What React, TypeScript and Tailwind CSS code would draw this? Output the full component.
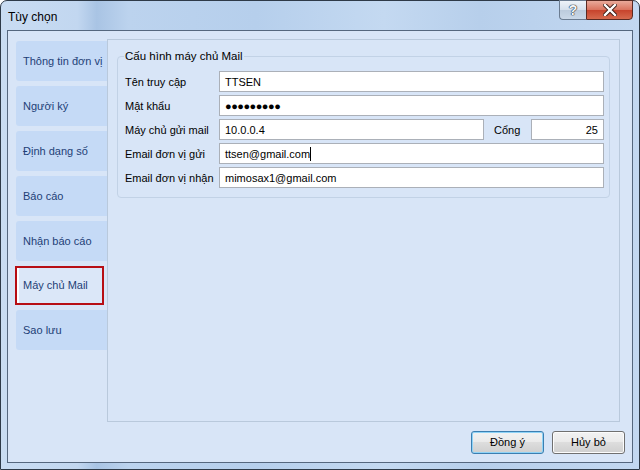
import React from 'react';

const font = { fontFamily: '"Liberation Sans", Arial, sans-serif' };

const tabs = ['Thông tin đơn vị', 'Người ký', 'Định dạng số', 'Báo cáo', 'Nhận báo cáo', 'Máy chủ Mail', 'Sao lưu'];

function Field({ value, className = '', right = false, caret = false }: { value: string; className?: string; right?: boolean; caret?: boolean }) {
  return (
    <div className={`h-[21px] bg-white border border-[#abb0b8] flex items-center px-[5px] text-[11px] text-black ${right ? 'justify-end' : ''} ${className}`}>
      <span>{value}</span>
      {caret && <span className="w-px h-[14px] bg-black" />}
    </div>
  );
}

function Row({ label, children }: { label: string; children: React.ReactNode }) {
  return (
    <div className="flex items-center h-[21px]">
      <div className="w-[94px] text-[11px] text-black whitespace-nowrap">{label}</div>
      {children}
    </div>
  );
}

function Btn({ label, focused = false }: { label: string; focused?: boolean }) {
  return (
    <button
      className={`w-[73px] h-[23px] rounded-[3px] border text-[11px] text-black bg-[linear-gradient(#f2f2f2,#ebebeb_45%,#dddddd_50%,#cfcfcf)] ${
        focused ? 'border-[#3c7fb1] shadow-[inset_0_0_0_1px_#8fd3f7]' : 'border-[#707070] shadow-[inset_0_0_0_1px_#fcfcfc]'
      }`}
    >
      {label}
    </button>
  );
}

export default function App() {
  return (
    <div style={font} className="w-[640px] h-[470px] overflow-hidden bg-white">
      <div className="w-[640px] h-[470px] rounded-t-[7px] border border-[#2e3a48] flex flex-col bg-[linear-gradient(90deg,#c9dcf2_0%,#c2d7f0_12%,#a9c4e4_15%,#bcd3ee_20%,#b6cfec_40%,#c4d9f1_60%,#b7cfeb_75%,#c3d8f1_100%)]">
        {/* title bar */}
        <div className="h-[29px] flex items-start shrink-0">
          <div className="pl-[7px] pt-[7px] text-[12px] text-black flex-1">Tùy chọn</div>
          <div className="flex mr-[6px] mt-[-1px]">
            <div className="w-[27px] h-[20px] rounded-bl-[4px] border border-[#6b7c91] border-r-0 bg-[linear-gradient(#eef3f9,#d5e0ec_50%,#bccbdc_51%,#cad8e8)] flex items-center justify-center text-[14px] font-bold text-[#f5f7fa] [text-shadow:0_0_1px_#1e2733,0_0_1px_#1e2733,0_0_1px_#1e2733]">
              ?
            </div>
            <div className="w-[47px] h-[20px] rounded-br-[4px] border border-[#5a2a22] bg-[linear-gradient(#e9a99a,#d9725d_50%,#c7432c_51%,#d66a4e)] flex items-center justify-center">
              <svg width="14" height="12" viewBox="0 0 14 12">
                <path d="M2 1 L12 11 M12 1 L2 11" stroke="#3a1a14" strokeWidth="4.2" strokeLinecap="square" />
                <path d="M2 1 L12 11 M12 1 L2 11" stroke="#ffffff" strokeWidth="2.4" strokeLinecap="square" />
              </svg>
            </div>
          </div>
        </div>

        {/* client area */}
        <div className="flex-1 mx-[6px] mb-[6px] border border-[#55677e] bg-[#d8e5f7] flex flex-col pt-[8px] pl-[8px] pr-[12px]">
          <div className="flex h-[383px]">
            <div className="w-[91px] shrink-0 flex flex-col gap-[5px] pt-[2px]">
              {tabs.map((t, i) =>
                i === 5 ? (
                  <div key={t} className="w-[89px] h-[39px] ml-[-1px] border-2 border-[#b70e14] bg-[#dbe7f8] flex items-center pl-[6px] text-[11px] text-[#1e3f76] whitespace-nowrap shadow-[inset_2px_0_0_#ffffff]">
                    {t}
                  </div>
                ) : (
                  <div key={t} className="h-[40px] rounded-l-[3px] bg-[#c5daf6] flex items-center pl-[7px] text-[11px] text-[#1e3f76] whitespace-nowrap">
                    {t}
                  </div>
                )
              )}
            </div>
            <div className="flex-1 border border-[#b9c9dc] bg-[#d8e5f7] pt-[8px] px-[9px]">
              <fieldset className="border border-[#c2d2e6] rounded-[4px] pl-[7px] pr-[5px] pb-[9px]">
                <legend className="ml-[-1px] px-[1px] text-[11.5px] text-black">Cấu hình máy chủ Mail</legend>
                <div className="flex flex-col gap-[3px] mt-[6px]">
                  <Row label="Tên truy cập"><Field value="TTSEN" className="flex-1" /></Row>
                  <Row label="Mật khẩu">
                    <Field value="●●●●●●●●●" className="flex-1 tracking-[-0.5px] text-[9px]" />
                  </Row>
                  <Row label="Máy chủ gửi mail">
                    <Field value="10.0.0.4" className="w-[265px]" />
                    <div className="w-[47px] pl-[10px] text-[11px] text-black">Cổng</div>
                    <Field value="25" right className="flex-1" />
                  </Row>
                  <Row label="Email đơn vị gửi"><Field value="ttsen@gmail.com" caret className="flex-1" /></Row>
                  <Row label="Email đơn vị nhận"><Field value="mimosax1@gmail.com" className="flex-1" /></Row>
                </div>
              </fieldset>
            </div>
          </div>
          <div className="flex justify-end gap-[8px] mt-[9px] mr-[-5px]">
            <Btn label="Đồng ý" focused />
            <Btn label="Hủy bỏ" />
          </div>
        </div>
      </div>
    </div>
  );
}
